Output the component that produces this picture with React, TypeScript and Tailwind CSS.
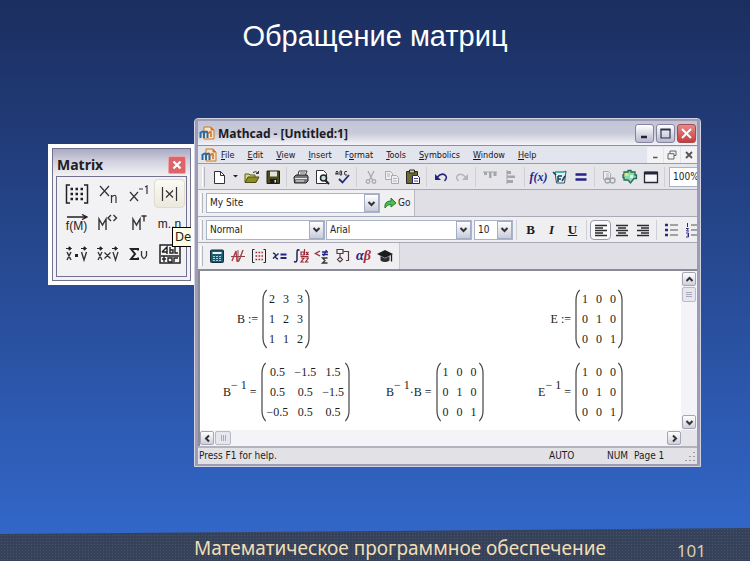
import React from "react";

type Kids = { children?: React.ReactNode };

/* ---------- shared bits ---------- */

function Icon({ children, w = 16, h = 16 }: Kids & { w?: number; h?: number }) {
  return (
    <svg width={w} height={h} viewBox={`0 0 ${w} ${h}`} fill="none" aria-hidden="true" className="shrink-0">
      {children}
    </svg>
  );
}

function Tool({ label, children, active }: Kids & { label: string; active?: boolean }) {
  return (
    <button
      type="button"
      aria-label={label}
      className={
        active
          ? "flex h-5 w-[21px] shrink-0 items-center justify-center rounded-sm border border-[#9a9aae] bg-[#fafafa]"
          : "flex h-5 w-[21px] shrink-0 items-center justify-center"
      }
    >
      {children}
    </button>
  );
}

function Sep() {
  return (
    <span className="flex w-[7px] shrink-0 justify-center">
      <span className="h-5 w-px bg-[#cfcfd8]" />
    </span>
  );
}

function Handle() {
  return <span className="mr-[3px] h-5 w-[3px] shrink-0 border-x border-l-white border-r-[#b5b5bf]" />;
}

function Chevron({ dir }: { dir: "up" | "down" | "left" | "right" }) {
  const d = {
    up: "M1.5 6 4.5 3 7.5 6",
    down: "M1.5 3 4.5 6 7.5 3",
    left: "M6 1.5 3 4.5 6 7.5",
    right: "M3 1.5 6 4.5 3 7.5",
  }[dir];
  return (
    <Icon w={9} h={9}>
      <path d={d} stroke="#33333c" strokeWidth="2" />
    </Icon>
  );
}

function Combo({ label, value, className }: { label: string; value: string; className: string }) {
  return (
    <div className={`relative flex h-5 border border-[#a9b4c9] bg-white ${className}`}>
      <select
        aria-label={label}
        className="w-full appearance-none bg-transparent pl-[3px] text-[10px] leading-4 text-[#1d1d22] outline-none"
      >
        <option>{value}</option>
      </select>
      <span className="pointer-events-none absolute inset-y-0 right-0 flex w-[15px] items-center justify-center border border-[#a3aec6] bg-linear-to-b from-white to-[#c9cbda]">
        <Chevron dir="down" />
      </span>
    </div>
  );
}

function ScrollButton({ dir }: { dir: "up" | "down" | "left" | "right" }) {
  return (
    <button
      type="button"
      aria-label={`Scroll ${dir}`}
      className="flex h-[14px] w-[14px] shrink-0 items-center justify-center rounded-[2px] border border-[#a5a5b5] bg-linear-to-b from-white to-[#cfcfdb]"
    >
      <Chevron dir={dir} />
    </button>
  );
}

/* ---------- matrix palette ---------- */

function VectorMark({ x }: { x: number }) {
  return <path d={`M${x} 2.500h3M${x + 3} .8l2.500 1.700-2.500 1.700z`} stroke="#222" fill="#222" />;
}

function PaletteButton({ label, children, raised }: Kids & { label: string; raised?: boolean }) {
  return (
    <button
      type="button"
      aria-label={label}
      className={
        raised
          ? "flex h-[29px] w-full items-center justify-center rounded-[4px] border border-[#dedbd0] bg-linear-to-b from-[#fbfaf4] to-[#ebe9dd]"
          : "flex h-[29px] w-full items-center justify-center"
      }
    >
      {children}
    </button>
  );
}

function MatrixPalette() {
  return (
    <section className="mt-[26px] w-[146px] shrink-0 overflow-hidden border-4 border-r-[3px] border-white bg-[#f2f2f4] text-[#202024]">
      <div className="border border-[#72728f] px-[3px] pb-[3px]">
        <header className="-mx-[3px] flex h-[27px] items-center justify-between bg-linear-to-b from-[#a9aac4] via-[#d4d4e0] to-[#f2f2f4] pr-1 pl-1">
          <h2 className="pt-1 text-[14px] leading-4 font-bold font-[Noto_Sans,sans-serif]">Matrix</h2>
          <button
            type="button"
            aria-label="Close"
            className="mt-1 flex h-[18px] w-[18px] items-center justify-center rounded-[2px] border border-[#e9a5a8] bg-[#dd6569]"
          >
            <Icon w={10} h={10}>
              <path d="M1.500 1.500l7 7M8.500 1.500l-7 7" stroke="#fff" strokeWidth="2.200" />
            </Icon>
          </button>
        </header>
        <div className="border border-[#72728f] pt-[2px] pr-px pb-2 pl-1">
          <div className="grid grid-cols-4 gap-y-px text-[13px] leading-4">
            <PaletteButton label="Insert matrix">
              <Icon w={24} h={20}>
                <path d="M5 1H1.500v18H5M19 1h3.500v18H19" stroke="#222" strokeWidth="1.500" />
                <path
                  d="M5.500 5H18M5.500 10H18M5.500 15H18"
                  stroke="#222"
                  strokeWidth="2.500"
                  strokeDasharray="2.500 2.500"
                />
              </Icon>
            </PaletteButton>
            <PaletteButton label="Subscript">
              <Icon w={20} h={20}>
                <path d="M2 2l9 10M11 2L2 12" stroke="#333" strokeWidth="1.200" />
                <path d="M13.500 19v-8M13.500 13q4-3.500 4.500 0v6" stroke="#333" strokeWidth="1.200" />
              </Icon>
            </PaletteButton>
            <PaletteButton label="Inverse">
              <Icon w={22} h={20}>
                <path d="M2 8l8 9M10 8l-8 9M11 5h4M17 3l2-1v8" stroke="#333" strokeWidth="1.200" />
              </Icon>
            </PaletteButton>
            <div className="relative">
              <PaletteButton label="Determinant" raised>
                <Icon w={29} h={18}>
                  <path d="M7.500 2v14M21.500 2v14M11 5.500l7 7M18 5.500l-7 7" stroke="#333" strokeWidth="1.200" />
                </Icon>
              </PaletteButton>
              <span
                role="tooltip"
                className="absolute top-12 left-[18px] z-10 h-5 border border-black bg-[#ffffe6] px-[2px] text-[13px] leading-[18px] text-[#222] font-[DejaVu_Sans_Condensed,sans-serif]"
              >
                Det
              </span>
            </div>

            <PaletteButton label="Vectorize">
              <span className="flex flex-col items-center">
                <Icon w={22} h={6}>
                  <path d="M1 3h19M16 .5l5 2.500-5 2.500" stroke="#222" strokeWidth="1.300" />
                </Icon>
                <span className="text-[12px] leading-[13px]">f(M)</span>
              </span>
            </PaletteButton>
            <PaletteButton label="Matrix column">
              <Icon w={22} h={20}>
                <path d="M2 16V5l3.500 6L9 5v11M14 1l-3 3 3 3M16.500 1l3 3-3 3" stroke="#333" strokeWidth="1.400" />
              </Icon>
            </PaletteButton>
            <PaletteButton label="Transpose">
              <Icon w={20} h={20}>
                <path d="M4 16V5l3.500 6L11 5v11M12.500 2h5M15 2v5.500" stroke="#333" strokeWidth="1.400" />
              </Icon>
            </PaletteButton>
            <PaletteButton label="Range variable">
              <span className="text-[12px] leading-4">m..n</span>
            </PaletteButton>

            <PaletteButton label="Dot product">
              <Icon w={22} h={16}>
                <VectorMark x={0} />
                <VectorMark x={15} />
                <path d="M1 6l4 8M5 6l-4 8M15.500 6l2.500 8 2.500-8" stroke="#333" strokeWidth="1.400" />
                <path d="M9 9.500h3" stroke="#222" strokeWidth="3" />
              </Icon>
            </PaletteButton>
            <PaletteButton label="Cross product">
              <Icon w={22} h={16}>
                <VectorMark x={0} />
                <VectorMark x={15} />
                <path
                  d="M1 6l4 8M5 6l-4 8M16 6l2.500 8L21 6M7.500 6.500l6 6M13.500 6.500l-6 6"
                  stroke="#333"
                  strokeWidth="1.300"
                />
              </Icon>
            </PaletteButton>
            <PaletteButton label="Vector sum">
              <Icon w={20} h={14}>
                <path d="M9 3.500V2H2l4 5-4 5h7v-1.500" stroke="#222" strokeWidth="2" />
                <path d="M12.500 4v4.500q2.500 6 5 0V4" stroke="#333" strokeWidth="1.300" />
              </Icon>
            </PaletteButton>
            <PaletteButton label="Picture">
              <Icon w={22} h={20}>
                <rect x="1" y="1" width="20" height="18" fill="#f5f5f5" stroke="#222" strokeWidth="1.500" />
                <path
                  d="M3 8l5-5v7M3 8h5M11 3v6h3V6h-3M16 3v6h3M2 12h18M5 12v6M3 15h4M9 18v-4h4v4H9M15 18v-4h4"
                  stroke="#222"
                  strokeWidth="1.400"
                />
              </Icon>
            </PaletteButton>
          </div>
        </div>
      </div>
    </section>
  );
}

/* ---------- Mathcad window ---------- */

function AppLogo() {
  return (
    <Icon w={16} h={14}>
      <path d="M5 1h7l3 3v9H5z" fill="#f6e3c8" stroke="#c47a2c" />
      <path d="M12 1v3h3" fill="#e8762c" stroke="#c47a2c" />
      <path d="M1.500 12V6M1.500 7q3-3 3.500 0v5M5 7q3-3 3.500 0v5" stroke="#2c6c9c" strokeWidth="2" />
      <path d="M12 11V5.500M9.500 8q.5-3 2.500-2" stroke="#d8692a" strokeWidth="1.500" />
    </Icon>
  );
}

function TitleBar() {
  const frame =
    "flex h-[19px] w-[19px] items-center justify-center rounded-[3px] border border-[#85859f] bg-linear-to-b from-white to-[#b9b9cd]";
  return (
    <header className="flex h-6 items-center gap-[3px] bg-linear-to-b from-[#c3c4d5] via-[#c9cad9] to-[#f4f4f8] pr-px pl-px">
      <AppLogo />
      <h2 className="pt-px text-[12px] leading-4 font-bold text-[#1b1b22] font-[Noto_Sans,sans-serif]">
        Mathcad - [Untitled:1]
      </h2>
      <div className="ml-auto flex gap-[2px]">
        <button type="button" aria-label="Minimize" className={frame}>
          <Icon w={13} h={13}>
            <path d="M3 10h6" stroke="#222238" strokeWidth="2.500" />
          </Icon>
        </button>
        <button type="button" aria-label="Maximize" className={frame}>
          <Icon w={13} h={13}>
            <path d="M2 2.500h9V11H2z" stroke="#33334a" strokeWidth="1.200" />
            <path d="M1.500 2.500h10" stroke="#33334a" strokeWidth="2" />
          </Icon>
        </button>
        <button
          type="button"
          aria-label="Close window"
          className="flex h-[19px] w-[19px] items-center justify-center rounded-[3px] border border-[#a84a52] bg-linear-to-b from-[#e58a8a] to-[#c9383f]"
        >
          <Icon w={13} h={13}>
            <path d="M2 2l9 9M11 2l-9 9" stroke="#fff" strokeWidth="2" />
          </Icon>
        </button>
      </div>
    </header>
  );
}

const menus = ["File", "Edit", "View", "Insert", "Format", "Tools", "Symbolics", "Window", "Help"];
const accessKeys: Record<string, number> = { Format: 1 };

function MenuBar() {
  return (
    <nav className="flex h-[18px] items-center border-t border-[#8d8da3] bg-[#e2e4ee] pl-[3px]">
      <AppLogo />
      <ul className="ml-1 flex gap-[13px] text-[9px] leading-4 text-[#15151a]">
        {menus.map((m) => {
          const k = accessKeys[m] ?? 0;
          return (
            <li key={m}>
              <button type="button">
                {m.slice(0, k)}
                <span className="underline">{m[k]}</span>
                {m.slice(k + 1)}
              </button>
            </li>
          );
        })}
      </ul>
      <div className="ml-auto flex h-4 gap-px">
        <button type="button" aria-label="Minimize worksheet" className="flex w-4 items-center justify-center bg-[#f3f3f6]">
          <Icon w={10} h={10}>
            <path d="M3 7.500h4.500" stroke="#555" strokeWidth="1.500" />
          </Icon>
        </button>
        <button type="button" aria-label="Restore worksheet" className="flex w-4 items-center justify-center bg-[#f3f3f6]">
          <Icon w={10} h={10}>
            <path d="M3 3.500V1h6v4.500H7M1 3.700h6V9H1z" stroke="#666" />
          </Icon>
        </button>
        <button type="button" aria-label="Close worksheet" className="flex w-4 items-center justify-center bg-[#f3f3f6]">
          <Icon w={10} h={10}>
            <path d="M2 2l6 6M8 2l-6 6" stroke="#555" strokeWidth="1.800" />
          </Icon>
        </button>
      </div>
    </nav>
  );
}

function StandardBar() {
  return (
    <div className="flex h-[27px] items-center overflow-hidden border-t border-b border-t-[#9b9bb0] border-b-[#a9a9b8] bg-[#e6e5ea] pl-1">
      <Handle />
      <Tool label="New">
        <Icon>
          <path d="M3.500 2.500h6l4 4v8h-10z" fill="#fff" stroke="#333" />
          <path d="M9.500 2.500v4h4" stroke="#333" />
        </Icon>
      </Tool>
      <button type="button" aria-label="New from template" className="flex h-5 w-3 shrink-0 items-center justify-center">
        <Icon w={7} h={5}>
          <path d="M1 1h5L3.500 3.500z" fill="#222" />
        </Icon>
      </button>
      <Tool label="Open">
        <Icon>
          <path d="M1 13V5h4l1 1h5v2" fill="#d9d98a" stroke="#5c5c14" />
          <path d="M1 13.500L4 8h11l-3 5.500z" fill="#8d8d22" stroke="#4b4b10" />
          <path d="M9 3.500q3-2 5 .5M14.500 2v2.500H12" stroke="#333" />
        </Icon>
      </Tool>
      <Tool label="Save">
        <Icon>
          <path d="M2 2h12.500v12.500H2z" fill="#4a4c1c" stroke="#1e1e12" />
          <path d="M5 2.500h7v5H5z" fill="#e3e3da" />
          <path d="M5 10h7v4H5z" fill="#1c1c14" />
          <path d="M9.500 11h1.500v2.500H9.500z" fill="#eee" />
        </Icon>
      </Tool>
      <Sep />
      <Tool label="Print">
        <Icon>
          <path d="M5 6l1-4h8l-2 5" fill="#fff" stroke="#333" />
          <path d="M1 8l2-2h11l1 1.500V12l-2 2H1.500z" fill="#777" stroke="#222" />
          <path d="M2 9.500h12M3 12h8" stroke="#e8e8e8" />
          <path d="M7 4h5" stroke="#555" />
        </Icon>
      </Tool>
      <Tool label="Print preview">
        <Icon>
          <path d="M2.500 1.500h7l3 3v10h-10z" fill="#fff" stroke="#333" />
          <circle cx="9.500" cy="9" r="3" fill="#bfe0e4" stroke="#222" strokeWidth="1.500" />
          <path d="M11.500 11.500l3.500 3.500" stroke="#222" strokeWidth="2" />
        </Icon>
      </Tool>
      <Tool label="Check spelling">
        <Icon>
          <path d="M1 6V3l1-1 1 1v3M1 4.500h2M5 6V2h1.500L7 3 6 4l1 1-.5 1H5M12 2.500h-2L9.500 4l.5 2h2" stroke="#333" />
          <path d="M4 10l3.500 3.500L14 6" stroke="#1f2f7c" strokeWidth="1.800" />
        </Icon>
      </Tool>
      <Sep />
      <Tool label="Cut">
        <Icon>
          <path d="M5 2l4.500 9M11 2L6.500 11" stroke="#a9a9b2" strokeWidth="1.300" />
          <circle cx="5" cy="12.500" r="1.800" stroke="#a9a9b2" strokeWidth="1.300" />
          <circle cx="11" cy="12.500" r="1.800" stroke="#a9a9b2" strokeWidth="1.300" />
        </Icon>
      </Tool>
      <Tool label="Copy">
        <Icon>
          <path d="M1.500 2.500h5l2 2v6h-7z" fill="#eee" stroke="#a9a9b2" />
          <path d="M7.500 6.500h5l2 2v6h-7z" fill="#eee" stroke="#a9a9b2" />
          <path d="M3 5h3M3 7h3M9 9.500h4M9 12h4" stroke="#b5b5bd" />
        </Icon>
      </Tool>
      <Tool label="Paste">
        <Icon>
          <path d="M1.500 2.500h11v12h-11z" fill="#6b6a35" stroke="#2b2b1c" />
          <path d="M4.500 1h5v3h-5z" fill="#c9c9a0" stroke="#2b2b1c" />
          <path d="M7.500 6.500h5l2 2v6h-7z" fill="#fff" stroke="#23236e" />
          <path d="M9 9.500h4M9 12h4" stroke="#4c4c94" />
        </Icon>
      </Tool>
      <Sep />
      <Tool label="Undo">
        <Icon>
          <path d="M4 8.500q4-5 8-2.500 3 2.500-.5 6" stroke="#24247c" strokeWidth="1.600" />
          <path d="M2 5v6h6z" fill="#24247c" />
        </Icon>
      </Tool>
      <Tool label="Redo">
        <Icon>
          <path d="M12 8.500q-4-5-8-2.500-3 2.500.5 6" stroke="#b3b3bb" strokeWidth="1.500" />
          <path d="M14 5v6H8z" fill="#b3b3bb" />
        </Icon>
      </Tool>
      <Sep />
      <Tool label="Align across">
        <Icon>
          <path d="M1 3h14" stroke="#a5a5ae" />
          <path d="M2 3h3v3H2zM7 3h2.500v6H7zM11.500 3h3v4h-3z" fill="#a5a5ae" />
        </Icon>
      </Tool>
      <Tool label="Align down">
        <Icon>
          <path d="M4 1v14" stroke="#a5a5ae" />
          <path d="M4 2h4v3H4zM4 6.500h8v2.500H4zM4 11h6v3H4z" fill="#a5a5ae" />
        </Icon>
      </Tool>
      <Sep />
      <Tool label="Insert function">
        <span className="text-[12px] leading-4 font-bold text-[#23238a] italic font-[Liberation_Serif,serif]">f(x)</span>
      </Tool>
      <Tool label="Insert unit">
        <Icon>
          <path d="M3 3h9l2-1-1.500 12h-8z" fill="#dff1f0" stroke="#2a5a60" />
          <path d="M1 3l3 3M6 7h4M6 7v6M6 10h3M10 12l3-5" stroke="#1f3d5c" strokeWidth="1.500" />
          <path d="M4 3h8" stroke="#3fb7ae" strokeWidth="2" />
        </Icon>
      </Tool>
      <Tool label="Calculate">
        <Icon>
          <path d="M2.500 5.500h11M2.500 10.500h11" stroke="#23238a" strokeWidth="2.600" />
        </Icon>
      </Tool>
      <Sep />
      <Tool label="Insert hyperlink">
        <Icon>
          <path d="M2.500 2.500h5l2 2v6h-7z" fill="#eee" stroke="#a9a9b2" />
          <circle cx="6.500" cy="11.500" r="2.500" stroke="#a0a0a9" strokeWidth="1.300" />
          <circle cx="11.500" cy="11.500" r="2.500" stroke="#a0a0a9" strokeWidth="1.300" />
          <path d="M5 5h3M5 7h3" stroke="#b5b5bd" />
        </Icon>
      </Tool>
      <Tool label="Insert component">
        <Icon>
          <path
            d="M2 3h4V1.500h3V3h4v3h1.500v3.500H12L8.500 14 6 11H2V8.500H1V6h1z"
            fill="#8fd8a8"
            stroke="#256b5c"
            strokeWidth="1.300"
          />
          <path d="M2.500 4h4v3h-4z" fill="#e9e36a" />
          <path d="M8 6h3v3H8z" fill="#d8f5f2" />
        </Icon>
      </Tool>
      <Tool label="Run Mathconnex">
        <Icon>
          <path d="M1.500 3.500h13v10h-13z" fill="#f7f7fa" stroke="#26263a" strokeWidth="1.300" />
          <path d="M1.500 4h13" stroke="#26263a" strokeWidth="3" />
        </Icon>
      </Tool>
      <Sep />
      <input
        aria-label="Zoom"
        defaultValue="100%"
        className="ml-px h-5 w-10 shrink-0 border border-[#a9b4c9] bg-white pl-[3px] text-[10px] text-[#1d1d22] outline-none"
      />
    </div>
  );
}

function ResourcesBar() {
  return (
    <div className="flex h-[27px] items-stretch border-b border-[#a9a9b8] bg-[#dfdfe5]">
      <div className="flex items-center border-r border-[#b9b9c6] bg-[#f0f0f2] pr-1 pl-[2px]">
        <Handle />
        <Combo label="Resource" value="My Site" className="w-[174px]" />
        <button type="button" className="ml-[3px] flex items-center gap-px text-[10px] leading-4 text-[#26262c]">
          <Icon w={14} h={14}>
            <path d="M2 12Q1 5 8 5V2l5 5-5 4V8.500Q4 8 2 12z" fill="#4cc04c" stroke="#1f7a2c" />
          </Icon>
          Go
        </button>
      </div>
    </div>
  );
}

function Lines({ d }: { d: string }) {
  return (
    <Icon>
      <path d={d} stroke="#2a2a30" strokeWidth="1.300" />
    </Icon>
  );
}

function FormattingBar() {
  const glyph = "text-[13px] leading-4 font-bold text-[#1a1a1e] font-[Liberation_Serif,serif]";
  return (
    <div className="flex h-[26px] items-center overflow-hidden border-b border-[#a9a9b8] bg-[#efeff1] pl-[2px]">
      <Handle />
      <Combo label="Style" value="Normal" className="w-[119px] shrink-0" />
      <Combo label="Font" value="Arial" className="ml-px w-[146px] shrink-0" />
      <Combo label="Font size" value="10" className="ml-[2px] w-[39px] shrink-0" />
      <Sep />
      <Tool label="Bold">
        <span className={glyph}>B</span>
      </Tool>
      <Tool label="Italic">
        <span className={`${glyph} italic`}>I</span>
      </Tool>
      <Tool label="Underline">
        <span className={`${glyph} underline`}>U</span>
      </Tool>
      <Sep />
      <Tool label="Align left" active>
        <Lines d="M2 3.500h12M2 6h8M2 8.500h12M2 11h8M2 13.500h12" />
      </Tool>
      <Tool label="Align center">
        <Lines d="M2 3.500h12M4 6h8M2 8.500h12M4 11h8M2 13.500h12" />
      </Tool>
      <Tool label="Align right">
        <Lines d="M2 3.500h12M6 6h8M2 8.500h12M6 11h8M2 13.500h12" />
      </Tool>
      <Sep />
      <Tool label="Bullets">
        <Icon>
          <path d="M7 3h8M7 8h8M7 13h8" stroke="#555" />
          <path d="M2 3h3M2 8h3M2 13h3" stroke="#2b2b84" strokeWidth="2.500" />
        </Icon>
      </Tool>
      <Tool label="Numbering">
        <Icon>
          <path d="M7 3h8M7 8h8M7 13h8" stroke="#555" />
          <path d="M3.500 1v4M2 6.500h2.500L2.500 9H5M2 11h2.500v4H2M3 13h1.500" stroke="#2b2b84" />
        </Icon>
      </Tool>
    </div>
  );
}

function MathBar() {
  return (
    <div className="flex h-[28px] items-stretch border-b-2 border-[#8b8b97] bg-[#dfdfe5]">
      <div className="flex items-center border-r border-[#c9c9d2] bg-[#f0f0f2] pr-1 pl-[2px]">
        <Handle />
        <Tool label="Calculator">
          <Icon>
            <rect x="1.500" y="2" width="13" height="12.500" rx="1" fill="#1d5a70" stroke="#152e3c" />
            <path d="M3.500 5h9" stroke="#e6f4f7" strokeWidth="2" />
            <path d="M4 8.500h8M4 10.500h8M4 12.500h8" stroke="#9ed3de" strokeDasharray="2 1" />
          </Icon>
        </Tool>
        <Tool label="Graph">
          <Icon>
            <path d="M1 8.500h14M8 2v12" stroke="#7b4a50" />
            <path d="M2 13L6 3l1 10q2 1 3-3l3-8" stroke="#b03a46" strokeWidth="1.400" />
          </Icon>
        </Tool>
        <Tool label="Matrix">
          <Icon>
            <path d="M3.500 1.500h-2v13h2M12.500 1.500h2v13h-2" stroke="#222" />
            <path
              d="M4.500 4.500H12M4.500 8H12M4.500 11.500H12"
              stroke="#a02a3a"
              strokeWidth="1.700"
              strokeDasharray="1.700 1.300"
            />
          </Icon>
        </Tool>
        <Tool label="Evaluation">
          <Icon>
            <path d="M1 5.500q2-1 2.500 2.500T6 10.500M6.500 5.500L1 10.500" stroke="#24245c" strokeWidth="1.400" />
            <path d="M8.500 6.500H14.500M8.500 10H14.500" stroke="#23238a" strokeWidth="1.800" />
          </Icon>
        </Tool>
        <Tool label="Calculus">
          <Icon>
            <path d="M6.500 2.500Q4 0 4 5v6q0 4-3 2.500" stroke="#23235c" strokeWidth="1.500" />
            <path
              d="M8 4h3v3H8zM11.500 1v6M13 4l2.500 3M15.500 4L13 7M7.500 8.500h8M8 10h3l-3 4h3M12.500 10h3l-3 4h3"
              stroke="#9c2a36"
              strokeWidth="1.200"
            />
          </Icon>
        </Tool>
        <Tool label="Boolean">
          <Icon>
            <path d="M6 3L1.500 5.500 6 8" stroke="#a02a3a" strokeWidth="1.400" />
            <path d="M8 4h6M8 6.500h6M12.500 2l-3 6" stroke="#23238a" strokeWidth="1.400" />
            <path d="M13.500 10H8.500l2.500 2.500L8.500 15h5" stroke="#333" strokeWidth="1.300" />
          </Icon>
        </Tool>
        <Tool label="Programming">
          <Icon>
            <path
              d="M2 1.500h6v4H2zM5 5.500V9M5 9l2.500 2.500L5 14l-2.500-2.500zM8 3.500h5.500v9H11"
              stroke="#5c3a44"
              strokeWidth="1.200"
            />
          </Icon>
        </Tool>
        <Tool label="Greek">
          <span className="text-[14px] leading-4 font-bold italic font-[Liberation_Serif,serif]">
            <span className="text-[#23238a]">α</span>
            <span className="text-[#a8283a]">β</span>
          </span>
        </Tool>
        <Tool label="Symbolic">
          <Icon>
            <path d="M0 6l8-4 8 4-8 4z" fill="#1c1c20" />
            <path d="M3.500 8v4.500q4.500 3 9 0V8L8 10.500z" fill="#2c2c32" />
            <path d="M14.500 6.500v7" stroke="#1c1c20" strokeWidth="1.300" />
          </Icon>
        </Tool>
      </div>
    </div>
  );
}

/* ---------- worksheet ---------- */

function Paren({ flip }: { flip?: boolean }) {
  return (
    <svg
      width="5"
      height="60"
      viewBox="0 0 5 60"
      fill="none"
      aria-hidden="true"
      className={flip ? "-ml-[2px] -scale-x-100" : "-mr-[2px]"}
    >
      <path d="M4.700 1Q1 5 1 11v38q0 6 3.700 10" stroke="#444" strokeWidth="1.200" />
    </svg>
  );
}

function Matrix({ rows, wide }: { rows: string[][]; wide?: boolean }) {
  return (
    <div className="flex">
      <Paren />
      <table className="border-collapse text-center">
        <tbody>
          {rows.map((r, i) => (
            <tr key={i} className="h-5">
              {r.map((c, j) => (
                <td key={j} className={wide ? "px-[3px] py-0" : "w-[14px] p-0"}>
                  {c}
                </td>
              ))}
            </tr>
          ))}
        </tbody>
      </table>
      <Paren flip />
    </div>
  );
}

function Formula({ children, rows, wide }: Kids & { rows: string[][]; wide?: boolean }) {
  return (
    <div className="flex items-center gap-1 whitespace-nowrap">
      <span>{children}</span>
      <Matrix rows={rows} wide={wide} />
    </div>
  );
}

function Inv() {
  return <span className="relative -top-[7px]">− 1</span>;
}

const identity = [
  ["1", "0", "0"],
  ["0", "1", "0"],
  ["0", "0", "1"],
];
const b = [
  ["2", "3", "3"],
  ["1", "2", "3"],
  ["1", "1", "2"],
];
const bInverse = [
  ["0.5", "−1.5", "1.5"],
  ["0.5", "0.5", "−1.5"],
  ["−0.5", "0.5", "0.5"],
];

function Worksheet() {
  return (
    <div className="flex border-l-2 border-[#8b8b97] bg-white">
      <div className="min-w-0 flex-1">
        <div className="flex h-[159px] flex-col gap-[13px] pt-[18px] pr-[58px] text-[12px] leading-5 text-[#1c1c1c] font-[Liberation_Serif,serif]">
          <div className="flex justify-between pl-[37px]">
            <Formula rows={b}>B :=</Formula>
            <Formula rows={identity}>E :=</Formula>
          </div>
          <div className="flex gap-9 pl-[23px]">
            <Formula rows={bInverse} wide>
              B<Inv /> =
            </Formula>
            <Formula rows={identity}>
              B<Inv />
              ·B =
            </Formula>
            <div className="ml-auto">
              <Formula rows={identity}>
                E<Inv /> =
              </Formula>
            </div>
          </div>
        </div>
        <div className="flex h-4 items-center gap-px bg-[#f4f4f8]">
          <ScrollButton dir="left" />
          <span className="flex h-[14px] w-4 items-center justify-center gap-px rounded-[2px] border border-[#b9b9c8] bg-[#e6e6ee]">
            <span className="h-[6px] w-px bg-[#a9a9bb]" />
            <span className="h-[6px] w-px bg-[#a9a9bb]" />
            <span className="h-[6px] w-px bg-[#a9a9bb]" />
          </span>
          <span className="ml-auto flex">
            <ScrollButton dir="right" />
          </span>
        </div>
      </div>
      <div className="flex w-4 flex-col items-center bg-[#f4f4f8]">
        <div className="flex h-[159px] flex-col items-center gap-px pt-px pb-px">
          <ScrollButton dir="up" />
          <span className="flex h-[15px] w-[14px] flex-col items-center justify-center gap-px rounded-[2px] border border-[#b9b9c8] bg-[#e6e6ee]">
            <span className="h-px w-[6px] bg-[#a9a9bb]" />
            <span className="h-px w-[6px] bg-[#a9a9bb]" />
            <span className="h-px w-[6px] bg-[#a9a9bb]" />
          </span>
          <span className="mt-auto flex">
            <ScrollButton dir="down" />
          </span>
        </div>
        <div className="h-4 w-full bg-[#e6e6ea]" />
      </div>
    </div>
  );
}

function StatusBar() {
  return (
    <footer className="flex h-[18px] items-center border-t-2 border-[#b3b3bd] bg-[#e2e2e6] pl-px text-[10px] leading-4 text-[#1d1d22]">
      <span className="flex-1">Press F1 for help.</span>
      <span className="w-[30px]">AUTO</span>
      <span className="ml-[3px] w-[25px] border-l border-[#cfcfd6]" />
      <span className="w-[27px]">NUM</span>
      <span className="w-[48px]">Page 1</span>
      <Icon w={15} h={15}>
        <path d="M12 3v1M12 7v1M8 7v1M12 11v1M8 11v1M4 11v1" stroke="#9c9ca8" strokeWidth="2" />
      </Icon>
    </footer>
  );
}

function MathcadWindow() {
  return (
    <section className="min-w-0 flex-1 rounded-t-[4px] border border-[#d3d3e2] bg-[#9696b0] font-[DejaVu_Sans_Condensed,sans-serif]">
      <div className="overflow-hidden rounded-t-[3px] border-x-3 border-y-2 border-[#9c9cb6]">
        <TitleBar />
        <MenuBar />
        <StandardBar />
        <ResourcesBar />
        <FormattingBar />
        <MathBar />
        <Worksheet />
        <StatusBar />
      </div>
    </section>
  );
}

/* ---------- slide ---------- */

export default function App() {
  return (
    <div className="flex min-h-screen flex-col bg-linear-to-b from-[#1b2e5f] to-[#336acf] font-[Liberation_Sans,sans-serif]">
      <h1 className="pt-4 text-center text-[29px] leading-10 text-white">Обращение матриц</h1>
      <main className="mt-[62px] mb-auto flex items-start pr-[49px] pl-12">
        <MatrixPalette />
        <MathcadWindow />
      </main>
      <footer className="flex h-[33px] items-start bg-[#364259] bg-[radial-gradient(#4a546a_1px,transparent_1px)] bg-[size:3px_3px] pr-11 pl-[194px] [clip-path:polygon(0_6px,100%_0,100%_100%,0_100%)]">
        <p className="pt-2 text-[19px] leading-6 text-[#f1deb6] font-[Noto_Sans,sans-serif]">
          Математическое программное обеспечение
        </p>
        <span className="ml-auto pt-[11px] text-[17px] leading-6 text-[#d9cfb4] font-[Noto_Sans,sans-serif]">101</span>
      </footer>
    </div>
  );
}
